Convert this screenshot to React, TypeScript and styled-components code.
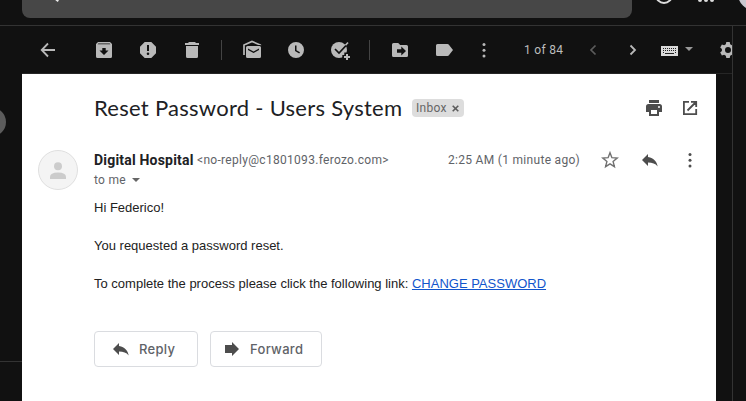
import React from "react";
import styled, { createGlobalStyle } from "styled-components";

const GlobalStyle = createGlobalStyle`
  * { box-sizing: border-box; }
  html, body { margin: 0; padding: 0; background: #111111; overflow: hidden; }
`;

const Window = styled.div`
  width: 746px;
  height: 401px;
  display: flex;
  flex-direction: column;
  overflow: hidden;
  background: #111111;
  font-family: Roboto, sans-serif;
`;

const Header = styled.header`
  height: 26px;
  flex: none;
  display: flex;
  align-items: flex-start;
  padding-left: 22px;
  border-bottom: 1px solid #333333;
`;

const SearchBar = styled.div`
  width: 610px;
  height: 18px;
  padding-left: 33px;
  background: #474747;
  border-radius: 0 0 8px 8px;
`;

const Svg = styled.svg`
  display: block;
  flex: none;
`;

const Columns = styled.div`
  flex: 1;
  display: flex;
  min-height: 0;
`;

const LeftRail = styled.aside`
  width: 22px;
  flex: none;
  padding-top: 81px;
`;

const RailHandle = styled.div`
  width: 6px;
  height: 30px;
`;

const RailRule = styled.div`
  height: 1px;
  margin-top: 224px;
  background: #333333;
`;

const Center = styled.main`
  width: 710px;
  flex: none;
  overflow: hidden;
`;

const RightRail = styled.aside`
  flex: 1;
  border-left: 1px solid #333333;
`;

const Toolbar = styled.div`
  height: 48px;
  width: 710px;
  display: flex;
  align-items: center;
  overflow: hidden;
  border-bottom: 1px solid #262626;
  color: #b9b9b9;
`;

const Slot = styled.span<{ $w?: number; $ml?: number }>`
  width: ${(p) => p.$w ?? 44}px;
  margin-left: ${(p) => p.$ml ?? 0}px;
  flex: none;
  display: flex;
  justify-content: center;
  align-items: center;
`;

const Divider = styled.span`
  width: 1px;
  height: 20px;
  flex: none;
  margin: 0 8px 0 7px;
  background: #444444;
`;

const Counter = styled.span`
  width: 40px;
  margin: 0 9px 0 22px;
  flex: none;
  font-size: 12px;
  line-height: 20px;
  letter-spacing: 0.3px;
  color: #bdbdbd;
  white-space: nowrap;
`;

const Message = styled.section`
  width: 694px;
  height: 327px;
  background: #ffffff;
  color: #222222;
`;

const SubjectRow = styled.div`
  height: 68px;
  display: flex;
  align-items: center;
  padding: 0 16px 0 72px;
  color: #4d4d4d;
`;

const Subject = styled.h1`
  width: 318px;
  margin: 0;
  padding-bottom: 1px;
  font: 400 22px/27px Lato, sans-serif;
  letter-spacing: 0.27px;
  color: #202124;
  white-space: nowrap;
`;

const Chip = styled.span`
  width: 52px;
  height: 18px;
  margin-right: auto;
  display: flex;
  align-items: center;
  gap: 5px;
  padding-left: 4px;
  border-radius: 4px;
  background: #dddddd;
  color: #666666;
  font-size: 12px;
  letter-spacing: 0.3px;
`;

const Meta = styled.div`
  height: 56px;
  display: flex;
  padding: 8px 6px 0 16px;
`;

const SenderBlock = styled.div`
  width: 354px;
  flex: none;
  margin-left: 16px;
`;

const SenderLine = styled.div`
  height: 20px;
  display: flex;
  align-items: center;
  line-height: 20px;
  white-space: nowrap;
`;

const Sender = styled.strong`
  width: 103px;
  font-size: 14px;
  font-weight: 700;
  letter-spacing: 0.2px;
  color: #202124;
`;

const Small = styled.span`
  font-size: 12px;
  letter-spacing: 0.3px;
  color: #5f6368;
`;

const Actions = styled.div`
  height: 20px;
  display: flex;
  align-items: center;
  color: #4d4d4d;
  white-space: nowrap;
`;

const Stamp = styled(Small)`
  width: 142px;
  flex: none;
`;

const Body = styled.div`
  padding-left: 72px;
  font: 13px/19px "Liberation Sans", Arial, sans-serif;
  color: #222222;
`;

const Paragraph = styled.p`
  margin: 0 0 19px;
  white-space: nowrap;
`;

const Link = styled.a`
  color: #1155cc;
  text-decoration: underline;
`;

const Buttons = styled.div`
  display: flex;
  gap: 12px;
  margin: 38px 0 0 72px;
`;

const ActionButton = styled.button<{ $w: number; $pad: number; $gap: number }>`
  width: ${(p) => p.$w}px;
  height: 36px;
  display: flex;
  align-items: center;
  gap: ${(p) => p.$gap}px;
  padding: 0 0 0 ${(p) => p.$pad}px;
  border: 1px solid #dadce0;
  border-radius: 4px;
  background: #ffffff;
  color: #4d4d4d;
`;

const ButtonLabel = styled.span`
  padding-bottom: 1px;
  font: 500 13px/20px Inter, sans-serif;
  letter-spacing: 0.3px;
  color: #5f6368;
`;

function Icon({ d, children, size = 20 }: { d?: string; children?: React.ReactNode; size?: number }) {
  return (
    <Svg width={size} height={size} viewBox="0 0 20 20" fill="currentColor">
      {d && <path d={d} fillRule="evenodd" />}
      {children}
    </Svg>
  );
}

const Dots = () => (
  <Icon>
    <circle cx="10" cy="4.5" r="1.5" />
    <circle cx="10" cy="10.3" r="1.5" />
    <circle cx="10" cy="16" r="1.5" />
  </Icon>
);

const Caret = ({ color = "currentColor" }: { color?: string }) => (
  <Svg width="8" height="4" viewBox="0 0 8 4">
    <path d="M0 0h8L4 4z" fill={color} />
  </Svg>
);

const ReplyIcon = () => <Icon d="M8 7V4L2 10l6 6v-3.500c4.400 0 7.400 1 9.700 4C17 12.200 14 8 8 7z" />;

export default function App() {
  return (
    <Window>
      <GlobalStyle />
      <Header>
        <SearchBar>
          <Svg width="6" height="3" viewBox="0 0 6 3">
            <path d="M0-1.500L3.300 1.300" stroke="#ececec" strokeWidth="2" />
          </Svg>
        </SearchBar>
        <Svg width="114" height="12" viewBox="632 0 114 12">
          <circle cx="664" cy="-5" r="8" fill="none" stroke="#dddddd" strokeWidth="2" />
          <circle cx="700" cy="0" r="2" fill="#dddddd" />
          <circle cx="706" cy="0" r="2" fill="#dddddd" />
          <circle cx="712" cy="0" r="2" fill="#dddddd" />
          <circle cx="754" cy="-6" r="16" fill="#c9c7cf" />
        </Svg>
      </Header>
      <Columns>
        <LeftRail>
          <RailHandle>
            <Svg width="6" height="30" viewBox="0 0 6 30">
              <circle cx="-8.500" cy="15" r="14.500" fill="#5c5c5c" />
            </Svg>
          </RailHandle>
          <RailRule />
        </LeftRail>
        <Center>
          <Toolbar>
            <Slot $w={52}>
              <Icon><path d="M17 10H4M10 3.500L3.700 10l6.300 6.500" fill="none" stroke="currentColor" strokeWidth="1.800" /></Icon>
            </Slot>
            <Slot $ml={8}>
              <Icon d="M4 2h12l2 2v12.500Q18 18 16.500 18h-13Q2 18 2 16.500V4zM4.300 3.400l-.7.8h12.800l-.7-.8zM8.300 8v2.500H5.500L10 15l4.500-4.500h-2.800V8z" />
            </Slot>
            <Slot>
              <Icon d="M6.700 2h6.600L18 6.700v6.600L13.300 18H6.700L2 13.300V6.700zM9 5v6h2V5zM10 12.500a1.300 1.300 0 1 0 0 2.600 1.300 1.300 0 0 0 0-2.600z" />
            </Slot>
            <Slot>
              <Icon d="M7 2h6l1 1h3v2H3V3h3zM4 6h12v10.500Q16 18 14.500 18h-9Q4 18 4 16.500z" />
            </Slot>
            <Divider />
            <Slot>
              <Icon>
                <path d="M2 15V5l8-3.500L18.300 5v1" fill="none" stroke="currentColor" strokeWidth="1.700" />
                <path d="M5 5h13q2 0 2 2H3.500V18H3V7q0-2 2-2z" fill="#111111" />
                <path fillRule="evenodd" d="M5.500 6h12Q19 6 19 7.500v9q0 1.500-1.500 1.500h-12Q4 18 4 16.500v-9Q4 6 5.500 6zM6 8.500v1.600l5.500 3 5.500-3V8.500l-5.500 3z" />
              </Icon>
            </Slot>
            <Slot>
              <Icon d="M10 2a8 8 0 1 0 0 16 8 8 0 0 0 0-16zM9 5.500h1.500v4.700l3.500 2-.8 1.300L9 11z" />
            </Slot>
            <Slot>
              <Icon>
                <circle cx="9" cy="10" r="8" />
                <path d="M5 9l4 4 8.500-9" fill="none" stroke="#111111" strokeWidth="1.700" />
                <path d="M15.500 5.300l2.500-2.800" stroke="currentColor" strokeWidth="1.600" />
                <path d="M12.300 20v-5h2V12.500h5.700V20z" fill="#111111" />
                <path d="M14 17h6M17 14v6" stroke="currentColor" strokeWidth="2" />
              </Icon>
            </Slot>
            <Divider />
            <Slot>
              <Icon d="M3.500 3h4.700l2 2h6.300Q18 5 18 6.500v9q0 1.500-1.500 1.500h-13Q2 17 2 15.500v-11Q2 3 3.500 3zM7 9.300v3.400h4.300v2.800L16 11l-4.700-4.500v2.800z" />
            </Slot>
            <Slot>
              <Icon d="M3.500 4h10q.9 0 1.400.7L19 10l-4.100 5.300q-.5.700-1.400.7h-10Q2 16 2 14.500v-9Q2 4 3.500 4z" />
            </Slot>
            <Slot $w={36}><Dots /></Slot>
            <Counter>1 of 84</Counter>
            <Slot $w={40}>
              <Icon><path d="M12.500 5.500L8 10l4.500 4.500" fill="none" stroke="#5c5c5c" strokeWidth="1.700" /></Icon>
            </Slot>
            <Slot $w={40}>
              <Icon><path d="M7.500 5.500L12 10l-4.500 4.500" fill="none" stroke="currentColor" strokeWidth="1.800" /></Icon>
            </Slot>
            <Slot $w={17} $ml={8}>
              <Svg width="17" height="14" viewBox="0 0 17 14">
                <path d="M0 3h17v10H0z" fill="#dadada" />
                <path d="M2 5.500h13M2 7.500h13M2 9.500h1M14 9.500h1" stroke="#222222" strokeDasharray="1 1" />
                <path d="M4 10.500h9" stroke="#222222" />
              </Svg>
            </Slot>
            <Slot $w={8} $ml={7}>
              <Svg width="8" height="6" viewBox="0 0 8 6"><path d="M0 0h8L4 4z" fill="#999999" /></Svg>
            </Slot>
            <Slot $w={20} $ml={25}>
              <Icon>
                <path d="M8.300 2h3.400l.5 2.300 1.700 1 2.200-.8 1.700 3-1.700 1.600v1.900l1.700 1.500-1.700 3-2.200-.8-1.700 1-.5 2.300H8.300l-.5-2.300-1.700-1-2.200.8-1.700-3L3.900 11V9L2.200 7.500l1.700-3 2.200.8 1.700-1zM10 7a3 3 0 1 0 0 6 3 3 0 0 0 0-6z" fillRule="evenodd" />
              </Icon>
            </Slot>
          </Toolbar>
          <Message>
            <SubjectRow>
              <Subject>Reset Password - Users System</Subject>
              <Chip>
                Inbox
                <Svg width="7" height="7" viewBox="0 0 7 7"><path d="M.7.7l5.600 5.600M6.300.7L.7 6.300" stroke="#5c5c5c" strokeWidth="1.600" /></Svg>
              </Chip>
              <Icon d="M5 2h10v3H5zM4.500 6h11Q18 6 18 8.500V14h-3v4H5v-4H2V8.500Q2 6 4.500 6zM7 12v4h6v-4zM15 8a1 1 0 1 0 0 2 1 1 0 0 0 0-2z" />
              <Slot $w={20} $ml={16}>
                <Icon><path d="M9 3.800H3.900v12.300h12.300V11M11 3.800h5.200V9M16 4l-8.500 8.500" fill="none" stroke="currentColor" strokeWidth="1.800" /></Icon>
              </Slot>
            </SubjectRow>
            <Meta>
              <Svg width="40" height="40" viewBox="0 0 40 40">
                <circle cx="20" cy="20" r="19.500" fill="#f4f4f4" stroke="#dfdfdf" />
                <circle cx="20" cy="16.300" r="4" fill="#cccccc" />
                <path d="M12 29v-2q0-4.500 8-4.500t8 4.500v2z" fill="#cccccc" />
              </Svg>
              <SenderBlock>
                <SenderLine>
                  <Sender>Digital Hospital</Sender>
                  <Small>&lt;no-reply@c1801093.ferozo.com&gt;</Small>
                </SenderLine>
                <SenderLine>
                  <Small>to me</Small>
                  <Slot $w={8} $ml={6}><Caret color="#666666" /></Slot>
                </SenderLine>
              </SenderBlock>
              <Actions>
                <Stamp>2:25 AM (1 minute ago)</Stamp>
                <Slot $w={40}>
                  <Icon><path d="M10 2.800l1.900 4.900 5.300.4-4.100 3.400 1.300 5.100-4.400-2.800-4.400 2.800 1.300-5.100-4.100-3.400 5.300-.4z" fill="none" stroke="#707070" strokeWidth="1.400" /></Icon>
                </Slot>
                <Slot $w={40}><ReplyIcon /></Slot>
                <Slot $w={40}><Dots /></Slot>
              </Actions>
            </Meta>
            <Body>
              <Paragraph>Hi Federico!</Paragraph>
              <Paragraph>You requested a password reset.</Paragraph>
              <Paragraph>To complete the process please click the following link: <Link>CHANGE PASSWORD</Link></Paragraph>
            </Body>
            <Buttons>
              <ActionButton $w={104} $pad={16} $gap={8}>
                <ReplyIcon />
                <ButtonLabel>Reply</ButtonLabel>
              </ActionButton>
              <ActionButton $w={112} $pad={11} $gap={8}>
                <Icon d="M3 6h7V3l7 7-7 7v-3H3z" />
                <ButtonLabel>Forward</ButtonLabel>
              </ActionButton>
            </Buttons>
          </Message>
        </Center>
        <RightRail />
      </Columns>
    </Window>
  );
}
